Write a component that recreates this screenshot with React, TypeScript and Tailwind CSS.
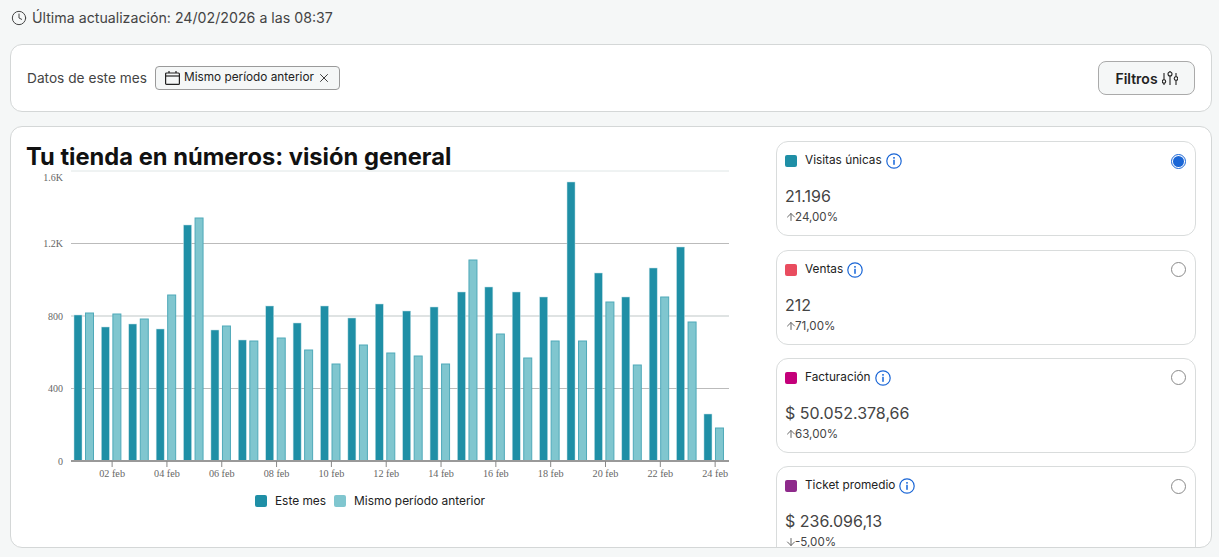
import React from 'react';
import { ArrowDown, ArrowUp, Clock, X } from 'lucide-react';

const tops: [number, number][] = [
  [315, 313], [327, 314], [324, 319], [329, 295], [225, 218], [330, 326],
  [340, 341], [306, 338], [323, 350], [306, 364], [318, 345], [304, 353],
  [311, 356], [307, 364], [292, 260], [287, 334], [292, 358], [297, 341],
  [182, 341], [273, 302], [297, 365], [268, 297], [247, 322], [414, 428],
];

const metrics = [
  { label: 'Visitas únicas', color: 'bg-[#1f8fa6]', value: '21.196', pct: '24,00%', up: true, on: true },
  { label: 'Ventas', color: 'bg-[#e94c5f]', value: '212', pct: '71,00%', up: true, on: false },
  { label: 'Facturación', color: 'bg-[#c4007a]', value: '$ 50.052.378,66', pct: '63,00%', up: true, on: false },
  { label: 'Ticket promedio', color: 'bg-[#8e2a8b]', value: '$ 236.096,13', pct: '-5,00%', up: false, on: false },
];

const STEP = 27.39;
const X0 = 45; // plot starts 71px from the page, svg sits at 26
const Y0 = 171 - 165;

const InfoIcon = () => (
  <svg width="16" height="16" viewBox="0 0 16 16" fill="none" className="ml-1 shrink-0">
    <circle cx="8" cy="8" r="7.2" stroke="#1a66d6" strokeWidth="1.2" />
    <rect x="7.1" y="6.8" width="1.8" height="5" fill="#3b7fe0" />
    <rect x="7.1" y="4" width="1.8" height="1.7" fill="#3b7fe0" />
  </svg>
);

const CalendarIcon = () => (
  <svg width="15" height="14" viewBox="0 0 15 14" fill="none" stroke="#222" strokeWidth="1.2" className="shrink-0">
    <rect x="0.6" y="2" width="13.8" height="11.4" rx="1" />
    <line x1="0.6" x2="14.4" y1="5" y2="5" />
    <line x1="4" x2="4" y1="0" y2="2" />
    <line x1="11" x2="11" y1="0" y2="2" />
  </svg>
);

const FilterIcon = () => (
  <svg width="16" height="16" viewBox="0 0 16 16" fill="none" stroke="#222" strokeWidth="1.1" className="shrink-0">
    <line x1="2" x2="2" y1="3" y2="15" />
    <circle cx="2" cy="11.5" r="1.7" fill="#f5f7f7" />
    <line x1="8" x2="8" y1="1" y2="15" />
    <circle cx="8" cy="4" r="2" fill="#f5f7f7" />
    <line x1="14" x2="14" y1="3" y2="15" />
    <circle cx="14" cy="8.5" r="1.8" fill="#f5f7f7" />
  </svg>
);

const Chart = () => {
  const y = (pageY: number) => pageY - 165;
  return (
    <svg width="710" height="320" className="block" style={{ fontFamily: '"Liberation Serif", serif' }}>
      <line x1={X0} x2="703" y1={Y0} y2={Y0} stroke="#dfe6e6" />
      <line x1={X0} x2="703" y1={y(243.5)} y2={y(243.5)} stroke="#bbbbbb" />
      <line x1={X0} x2="703" y1={y(316)} y2={y(316)} stroke="#dfe3e3" strokeWidth="2" />
      <line x1={X0} x2="703" y1={y(388.5)} y2={y(388.5)} stroke="#bbbbbb" />
      {[['1.6K', 177], ['1.2K', 243], ['800', 316], ['400', 388], ['0', 461]].map(([t, py]) => (
        <text key={t} x="37" y={y(Number(py)) + 4} textAnchor="end" fontSize="10" fill="#666">{t}</text>
      ))}
      {tops.map(([dark, light], i) => (
        <g key={i}>
          <rect x={X0 + 3 + STEP * i} y={y(dark)} width="8" height={461 - dark} fill="#1f8fa6" stroke="#bfe0e6" strokeWidth="0.5" />
          <rect x={X0 + 14.5 + STEP * i} y={y(light)} width="8" height={461 - light} fill="#80c6cf" stroke="#4fa9b9" strokeWidth="1" />
        </g>
      ))}
      <line x1={X0} x2="703" y1={y(461)} y2={y(461)} stroke="#999999" strokeWidth="2" />
      {tops.map((_, i) => {
        if (i % 2 === 0) return null;
        const cx = X0 + 27.41 * (i + 0.5);
        const day = String(i + 1).padStart(2, '0');
        return (
          <g key={i}>
            <line x1={cx} x2={cx} y1={y(461)} y2={y(467)} stroke="#888" />
            <text x={cx} y={y(477)} textAnchor="middle" fontSize="10.2" fill="#666">{day} feb</text>
          </g>
        );
      })}
    </svg>
  );
};

const MetricCard = ({ m }: { m: (typeof metrics)[number] }) => (
  <div className="h-[95px] shrink-0 rounded-xl border border-[#d9dcdc] bg-white pl-2 pr-[9px] pt-[11px]">
    <div className="flex h-[16px] items-center">
      <span className={`h-3 w-3 rounded-[2px] ${m.color}`} />
      <span className="ml-2 text-[11.8px] text-[#222]">{m.label}</span>
      <InfoIcon />
      {m.on ? (
        <span className="ml-auto flex h-[15px] w-[15px] items-center justify-center rounded-full border border-[#1a66d6]">
          <span className="h-[11px] w-[11px] rounded-full bg-[#1a66d6]" />
        </span>
      ) : (
        <span className="ml-auto h-[15px] w-[15px] rounded-full border border-[#8a8a8a]" />
      )}
    </div>
    <div className="mt-[17px] text-[16px] leading-[20px] text-[#444]">{m.value}</div>
    <div className="mt-[3px] flex items-center text-[11.6px] leading-[16px] text-[#444]">
      {m.up ? <ArrowUp className="-mr-[2px] h-3 w-3 text-[#666]" /> : <ArrowDown className="-mr-[2px] h-3 w-3 text-[#666]" />}
      {m.pct}
    </div>
  </div>
);

export default function App() {
  return (
    <div className="h-[557px] overflow-hidden bg-[#f5f7f7] px-[10px]" style={{ fontFamily: 'Inter, sans-serif' }}>
      <div className="flex h-[44px] items-center gap-[5px] pb-[8px] pl-[1px] text-[14.2px] text-[#444]">
        <Clock className="h-4 w-4" strokeWidth={1.5} />
        Última actualización: 24/02/2026 a las 08:37
      </div>

      <div className="flex h-[68px] w-[1202px] items-center justify-between rounded-xl border border-[#d4d7d7] bg-white pl-4 pr-4">
        <div className="flex items-center gap-2">
          <span className="text-[13.7px] text-[#444]">Datos de este mes</span>
          <span className="flex h-[24px] items-center gap-[4px] rounded border border-[#9a9a9a] bg-[#f5f7f7] pl-[9px] pr-[8px] text-[11.8px] text-[#222]">
            <CalendarIcon />
            Mismo período anterior
            <X className="-ml-[1px] h-[14px] w-[14px]" strokeWidth={1.5} />
          </span>
        </div>
        <button className="flex h-[34px] w-[97px] items-center justify-center gap-1 rounded-lg border border-[#aaaaaa] bg-[#f5f7f7] text-[14px] font-semibold text-[#222]">
          Filtros
          <FilterIcon />
        </button>
      </div>

      <div className="mt-[14px] flex h-[422px] w-[1202px] overflow-hidden rounded-xl border border-[#d4d7d7] bg-white pl-[15px] pt-[14px]">
        <div className="w-[750px] shrink-0">
          <h1 className="h-[24px] pt-[1px] text-[23.7px] font-bold leading-[30px] text-[#111]">Tu tienda en números: visión general</h1>
          <Chart />
          <div className="mt-[7px] flex w-[688px] items-center justify-center gap-2 text-[11.9px] text-[#222]">
            <span className="flex items-center gap-2">
              <span className="h-3 w-3 rounded-[2px] bg-[#1f8fa6]" />
              Este mes
            </span>
            <span className="flex items-center gap-2">
              <span className="h-3 w-3 rounded-[2px] bg-[#80c6cf]" />
              Mismo período anterior
            </span>
          </div>
        </div>
        <div className="mt-[0.3px] flex w-[420px] shrink-0 flex-col gap-[13.3px]">
          {metrics.map((m) => (
            <MetricCard key={m.label} m={m} />
          ))}
        </div>
      </div>
    </div>
  );
}
